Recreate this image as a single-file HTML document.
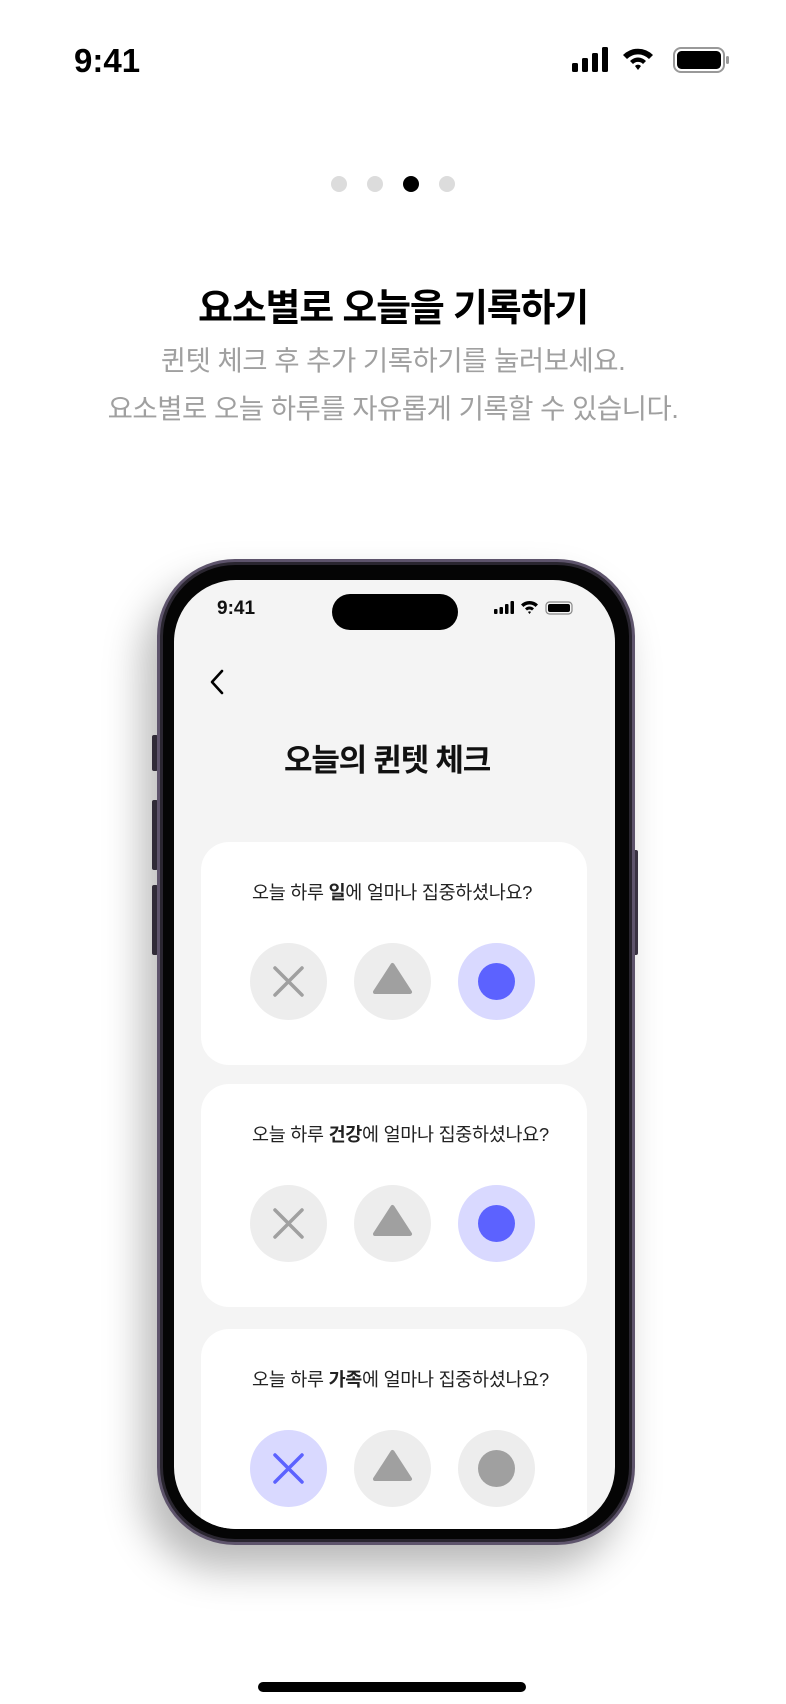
<!DOCTYPE html>
<html><head><meta charset="utf-8"><style>
*{margin:0;padding:0;box-sizing:border-box}
body{width:786px;height:1704px;background:#fff;position:relative;overflow:hidden;font-family:"Liberation Sans","Noto Sans CJK KR",sans-serif}
.abs{position:absolute}
.dot{position:absolute;top:176px;width:16px;height:16px;border-radius:50%;background:#dcdcdc}
.c{text-align:center;left:0;width:786px}
.phone{left:157px;top:559px;width:478px;height:986px;border-radius:78px;background:#2a2630;border:3px solid #5e546c;box-shadow:-14px 24px 40px rgba(0,0,0,.28)}
.screen{left:174px;top:580px;width:441px;height:949px;border-radius:62px;background:#f4f4f4;overflow:hidden}
.card{position:absolute;left:27px;width:386px;height:223px;background:#fff;border-radius:28px}
.q{position:absolute;top:37px;left:51px;white-space:nowrap;font-size:18.5px;color:#222;letter-spacing:-.3px}
.b{position:absolute;top:101px;width:77px;height:77px;border-radius:50%;background:#ededed}
.b svg{position:absolute;left:0;top:0}
.sel{background:#d9d9ff}
</style></head><body>
<div class="abs" style="left:74px;top:42px;font-size:33px;font-weight:bold;color:#000">9:41</div>
<svg class="abs" style="left:570px;top:46px" width="160" height="30" viewBox="0 0 160 30">
<rect x="2" y="17" width="6" height="9" rx="1.5"/><rect x="12" y="12" width="6" height="14" rx="1.5"/><rect x="22" y="7" width="6" height="19" rx="1.5"/><rect x="32" y="1" width="6" height="25" rx="1.5"/>
<path d="M53 9 A21 21 0 0 1 83 9 L79 13 A15.5 15.5 0 0 0 57 13Z M60 15 A11 11 0 0 1 76 15 L73 18 A7 7 0 0 0 63 18Z M65 20 A4 4 0 0 1 71 20 L68 24Z"/>
<rect x="104" y="2" width="50" height="24" rx="7" fill="none" stroke="#999" stroke-width="2"/><rect x="107" y="5" width="44" height="18" rx="4.5"/><rect x="156" y="10" width="3" height="8" rx="1.5" fill="#999"/>
</svg>
<div class="dot" style="left:331px"></div><div class="dot" style="left:367px"></div><div class="dot" style="left:403px;background:#000"></div><div class="dot" style="left:439px"></div>
<div class="abs c" style="top:277px;font-size:38px;font-weight:bold;color:#000;letter-spacing:-1.2px">요소별로 오늘을 기록하기</div>
<div class="abs c" style="top:337px;font-size:27.5px;color:#a0a0a0;line-height:48px;letter-spacing:-.5px">퀸텟 체크 후 추가 기록하기를 눌러보세요.<br>요소별로 오늘 하루를 자유롭게 기록할 수 있습니다.</div>
<div class="abs" style="left:152px;top:735px;width:6px;height:36px;background:#3d3646;border-radius:2px"></div>
<div class="abs" style="left:152px;top:800px;width:6px;height:70px;background:#3d3646;border-radius:2px"></div>
<div class="abs" style="left:152px;top:885px;width:6px;height:70px;background:#3d3646;border-radius:2px"></div>
<div class="abs" style="left:632px;top:850px;width:6px;height:105px;background:#3d3646;border-radius:2px"></div>
<div class="abs phone"></div>
<div class="abs" style="left:163px;top:565px;width:466px;height:974px;border-radius:72px;background:#050505"></div>
<div class="abs screen">
 <div class="abs" style="left:43px;top:18px;font-size:19px;font-weight:bold;color:#111">9:41</div>
 <div class="abs" style="left:158px;top:14px;width:126px;height:36px;border-radius:18px;background:#000"></div>
 <svg class="abs" style="left:320px;top:20px" width="90" height="16" viewBox="0 0 90 16">
 <rect x="0" y="9" width="3.5" height="5" rx="1"/><rect x="5.5" y="7" width="3.5" height="7" rx="1"/><rect x="11" y="4" width="3.5" height="10" rx="1"/><rect x="16.5" y="1" width="3.5" height="13" rx="1"/>
 <path d="M27 4.5 A12 12 0 0 1 44 4.5 L41.5 7 A8.5 8.5 0 0 0 29.5 7Z M31 8.5 A6 6 0 0 1 40 8.5 L38 10.5 A3.5 3.5 0 0 0 33 10.5Z M34 12 A2 2 0 0 1 37 12 L35.5 14Z"/>
 <rect x="52" y="2" width="26" height="12" rx="3.5" fill="none" stroke="#888" stroke-width="1.2"/><rect x="54" y="4" width="22" height="8" rx="2"/>
 </svg>
 <svg class="abs" style="left:34px;top:88px" width="20" height="28" viewBox="0 0 20 28"><path d="M14 3 L4 14 L14 25" fill="none" stroke="#000" stroke-width="2.6" stroke-linecap="round" stroke-linejoin="round"/></svg>
 <div class="abs" style="left:110px;top:155px;white-space:nowrap;font-size:31px;font-weight:bold;color:#111;letter-spacing:-1.2px">오늘의 퀸텟 체크</div>

 <div class="card" style="top:262px"><div class="q">오늘 하루 <b>일</b>에 얼마나 집중하셨나요?</div>
  <div class="b" style="left:49px"><svg width="77" height="77"><path d="M25 25L52 52M52 25L25 52" stroke="#a0a0a0" stroke-width="3.5" stroke-linecap="round"/></svg></div>
  <div class="b" style="left:153px"><svg width="77" height="77"><path d="M38.5 22 L56 49 L21 49Z" fill="#a0a0a0" stroke="#a0a0a0" stroke-width="4" stroke-linejoin="round"/></svg></div>
  <div class="b sel" style="left:257px"><svg width="77" height="77"><circle cx="38.5" cy="38.5" r="18.5" fill="#5c62ff"/></svg></div>
 </div>
 <div class="card" style="top:504px"><div class="q">오늘 하루 <b>건강</b>에 얼마나 집중하셨나요?</div>
  <div class="b" style="left:49px"><svg width="77" height="77"><path d="M25 25L52 52M52 25L25 52" stroke="#a0a0a0" stroke-width="3.5" stroke-linecap="round"/></svg></div>
  <div class="b" style="left:153px"><svg width="77" height="77"><path d="M38.5 22 L56 49 L21 49Z" fill="#a0a0a0" stroke="#a0a0a0" stroke-width="4" stroke-linejoin="round"/></svg></div>
  <div class="b sel" style="left:257px"><svg width="77" height="77"><circle cx="38.5" cy="38.5" r="18.5" fill="#5c62ff"/></svg></div>
 </div>
 <div class="card" style="top:749px"><div class="q">오늘 하루 <b>가족</b>에 얼마나 집중하셨나요?</div>
  <div class="b sel" style="left:49px"><svg width="77" height="77"><path d="M25 25L52 52M52 25L25 52" stroke="#5c62ff" stroke-width="3.5" stroke-linecap="round"/></svg></div>
  <div class="b" style="left:153px"><svg width="77" height="77"><path d="M38.5 22 L56 49 L21 49Z" fill="#a0a0a0" stroke="#a0a0a0" stroke-width="4" stroke-linejoin="round"/></svg></div>
  <div class="b" style="left:257px"><svg width="77" height="77"><circle cx="38.5" cy="38.5" r="18.5" fill="#a0a0a0"/></svg></div>
 </div>
</div>
<div class="abs" style="left:258px;top:1682px;width:268px;height:10px;border-radius:5px;background:#000"></div>
</body></html>
